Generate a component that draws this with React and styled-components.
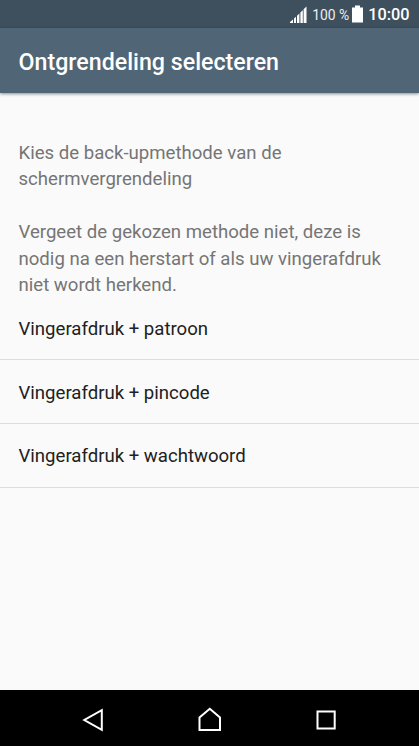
import React from "react";
import styled, { createGlobalStyle } from "styled-components";

const GlobalStyle = createGlobalStyle`
  body {
    margin: 0;
    background: #fafafa;
    font-family: Roboto, "Liberation Sans", sans-serif;
  }
`;

const Screen = styled.div`
  display: flex;
  flex-direction: column;
  width: 419px;
  height: 746px;
  overflow: hidden;
  background: #fafafa;
`;

/**
 * Header
 */
const StatusBar = styled.div`
  display: flex;
  align-items: center;
  justify-content: flex-end;
  flex: none;
  height: 28px;
  padding-right: 9.5px;
  box-sizing: border-box;
  background: #3e505e;
  color: #ffffff;
`;

const BatteryText = styled.span`
  margin-left: 5.5px;
  margin-right: 3px;
  padding-top: 2px;
  font-size: 13.9px;
  line-height: 26px;
  color: #eceef0;
`;

const Clock = styled.span`
  margin-left: 5px;
  padding-top: 2px;
  font-size: 16.3px;
  line-height: 26px;
  font-weight: 500;
`;

const TitleBar = styled.header`
  display: flex;
  align-items: center;
  flex: none;
  height: 65px;
  padding: 3px 18.6px 0;
  box-sizing: border-box;
  background: #506676;
  box-shadow: 0 1px 3px rgba(0, 0, 0, 0.45);
`;

const Title = styled.h1`
  margin: 0;
  font-size: 23.2px;
  line-height: 28px;
  font-weight: 500;
  color: #ffffff;
`;

/**
 * Body
 */
const Content = styled.main`
  flex: 1;
  padding-top: 47px;
`;

const Explanation = styled.p`
  margin: 0 18.5px 26.4px;
  font-size: 18.6px;
  line-height: 26.4px;
  color: #757575;
`;

const MethodList = styled.ul`
  margin: -28.4px 0 0;
  padding: 0;
  list-style: none;
`;

const Method = styled.li`
  display: flex;
  align-items: center;
  height: 63.8px;
  padding: 2px 18.5px 0;
  box-sizing: border-box;
  border-bottom: 1px solid #dcdcdc;
  font-size: 18.58px;
  color: #212121;
`;

/**
 * Footer
 */
const NavBar = styled.nav`
  display: flex;
  align-items: center;
  justify-content: space-between;
  flex: none;
  height: 56px;
  padding: 4px 79px 0 79px;
  box-sizing: border-box;
  background: #000000;
`;

const NavIcon = styled.svg`
  width: 28px;
  height: 28px;
  fill: none;
  stroke: #ffffff;
  stroke-width: 2;
`;

const methods = ["Vingerafdruk + patroon", "Vingerafdruk + pincode", "Vingerafdruk + wachtwoord"];

const SignalIcon = () => (
  <svg width="17" height="17" viewBox="0 0 17 17" fill="#ffffff">
    <path d="M0 17V16L3 13.5V17ZM4 17V12.6L6 10.7V17ZM7 17V9.8L9.4 7.5V17ZM10.4 17V6.6L12.8 4.2V17ZM13.6 17V3.3L16.5 0.5V17Z" />
  </svg>
);

const BatteryIcon = () => (
  <svg width="11" height="18" viewBox="0 0 11 18" fill="#ffffff">
    <path d="M3 0.5H8V2.5H11V17.5H0V2.5H3Z" />
  </svg>
);

const App = () => {
  return (
    <Screen>
      <GlobalStyle />
      <StatusBar>
        <SignalIcon />
        <BatteryText>100 %</BatteryText>
        <BatteryIcon />
        <Clock>10:00</Clock>
      </StatusBar>
      <TitleBar>
        <Title>Ontgrendeling selecteren</Title>
      </TitleBar>

      <Content>
        <Explanation>
          Kies de back-upmethode van de
          <br />
          schermvergrendeling
        </Explanation>
        <Explanation>
          Vergeet de gekozen methode niet, deze is
          <br />
          nodig na een herstart of als uw vingerafdruk
          <br />
          niet wordt herkend.
        </Explanation>
        <MethodList>
          {methods.map((method) => (
            <Method key={method}>{method}</Method>
          ))}
        </MethodList>
      </Content>

      <NavBar>
        <NavIcon viewBox="0 0 28 28">
          <path d="M22.8 4.2V23.8L5.3 14Z" />
        </NavIcon>
        <NavIcon viewBox="0 0 28 28">
          <path d="M3.5 24V11.5L13.8 2.8L24 11.5V24Z" />
        </NavIcon>
        <NavIcon viewBox="0 0 28 28">
          <path d="M5.5 5.5H22.7V22.5H5.5Z" />
        </NavIcon>
      </NavBar>
    </Screen>
  );
};

export default App;
